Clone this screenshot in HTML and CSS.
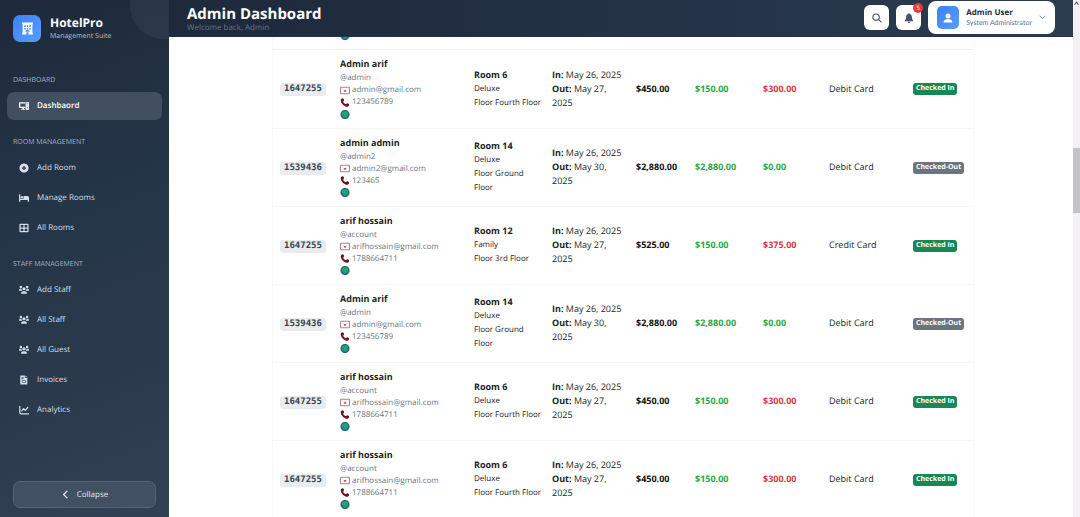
FILE: index.html
```html
<!DOCTYPE html>
<html lang="en">
<head>
<meta charset="utf-8">
<meta name="viewport" content="width=device-width, initial-scale=1">
<title>Admin Dashboard</title>
<link rel="stylesheet" href="styles.css">
</head>
<body>
<svg class="sprite" aria-hidden="true">
  <symbol id="i-building" viewBox="0 0 24 24"><path fill-rule="evenodd" d="M2 1h20v3h-1v16h1v3h-8v-4h-4v4H2v-3h1V4H2zM6 6v3h3V6zm5 0v3h2V6zm4 0v3h3V6zM6 11v3h3v-3zm5 0v3h2v-3zm4 0v3h3v-3zM8 18h8c0-5-8-5-8 0z"/></symbol>
  <symbol id="i-devices" viewBox="0 0 24 24"><path fill-rule="evenodd" d="M2 3h13v3H3v8h12v3h-3v2h3v2H5v-2h3v-2H2c-1 0-2-1-2-2V5c0-1 1-2 2-2zM17 3h6c1 0 1 0 1 1v16c0 1 0 1-1 1h-6c-1 0-1 0-1-1V4c0-1 0-1 1-1zm1 3v2h4V6zm0 4v1h4v-1zm2 5a1.300 1.300 0 1 0 .1 0z"/></symbol>
  <symbol id="i-plus" viewBox="0 0 24 24"><path fill-rule="evenodd" d="M12 1a11 11 0 1 0 .1 0zM10.500 7h3v3.500H17v3h-3.500V17h-3v-3.500H7v-3h3.500z"/></symbol>
  <symbol id="i-bed" viewBox="0 0 24 24"><path d="M0 3h3v11h8V7h9c2 0 4 2 4 4v10h-3v-4H3v4H0z"/><circle cx="7" cy="10" r="2.800"/></symbol>
  <symbol id="i-grid" viewBox="0 0 24 24"><path fill-rule="evenodd" d="M3 2h18c1 0 2 1 2 2v16c0 1-1 2-2 2H3c-1 0-2-1-2-2V4c0-1 1-2 2-2zm1 3v5.500h6.500V5zm9.500 0v5.500H20V5zM4 13.500V19h6.500v-5.500zm9.500 0V19H20v-5.500z"/></symbol>
  <symbol id="i-users" viewBox="0 0 24 24"><circle cx="4.500" cy="5" r="3"/><circle cx="19.500" cy="5" r="3"/><circle cx="12" cy="9" r="3.800"/><path d="M0 13c0-3 2-4 4-4h2c0 2 .5 3.500 2 5H0zM24 13c0-3-2-4-4-4h-2c0 2-.5 3.500-2 5h8zM5 21c0-4 2-6 5-6h4c3 0 5 2 5 6z"/></symbol>
  <symbol id="i-file" viewBox="0 0 24 24"><path fill-rule="evenodd" d="M4 1h10v6h6v15c0 1 0 1-1 1H4c-1 0-1 0-1-1V2c0-1 0-1 1-1zm2 4v1.500h5V5zm0 3.500V10h5V8.500zM7 13v5h10v-5zm1.500 1.500h7v2h-7z"/><path d="M15.500 1 20 5.500h-4.500z"/></symbol>
  <symbol id="i-chart" viewBox="0 0 24 24"><path d="M2 3v15c0 2 1 3 3 3h18M6.500 14l4.500-5 4 4 6-7" fill="none" stroke="currentColor" stroke-width="3" stroke-linecap="round" stroke-linejoin="round"/></symbol>
  <symbol id="i-left" viewBox="0 0 24 24"><path d="M16 3 7 12l9 9" fill="none" stroke="currentColor" stroke-width="3.500" stroke-linecap="round" stroke-linejoin="round"/></symbol>
  <symbol id="i-down" viewBox="0 0 24 24"><path d="m3 7 9 9 9-9" fill="none" stroke="currentColor" stroke-width="3" stroke-linecap="round" stroke-linejoin="round"/></symbol>
  <symbol id="i-search" viewBox="0 0 24 24"><path d="M16 16l6 6M17.500 10a7.700 7.700 0 1 1-15.400 0 7.700 7.700 0 0 1 15.400 0z" fill="none" stroke="currentColor" stroke-width="2.800" stroke-linecap="round"/></symbol>
  <symbol id="i-bell" viewBox="0 0 24 24"><path d="M12 0c1 0 1.600.7 1.600 1.600v.9C17 3.200 19 6 19 9.500c0 4 1 6 2.600 8 .8 1 .2 2-1 2H3.400c-1.200 0-1.800-1-1-2C4 15.500 5 13.500 5 9.500 5 6 7 3.200 10.400 2.500v-.9C10.400.7 11 0 12 0zM9 21h6c0 4-6 4-6 0z"/></symbol>
  <symbol id="i-user" viewBox="0 0 24 24"><circle cx="12" cy="7" r="6"/><path d="M1.500 23c0-5 3-8 7.500-8h6c4.500 0 7.500 3 7.500 8z"/></symbol>
  <symbol id="i-mail" viewBox="0 0 20 16"><path d="M1 1.500h18v13H1z" fill="#fff" stroke="#85807f" stroke-width="1.800"/><path d="M2 3l6 5M18 3l-6 5M3 13l4-4M17 13l-4-4" stroke="#ecdfe0" stroke-width="1.500"/><path d="M10 11.500 7.800 8.900c-.8-1.400 1.400-2.400 2.200-1 .8-1.400 3-.4 2.200 1z" fill="#e0404a"/></symbol>
  <symbol id="i-phone" viewBox="0 0 20 20"><path d="M3 1C6-1 9 4 7.500 6L6 7.500c1 3 3 5 6 6l2-1.500c2-1 6 1.500 5 4-1.500 4-6 4.500-10 2C4 15 0 9 .5 5 .8 3 1.500 2 3 1z" fill="#7d1420"/><path d="M2 3.500 6 4M14 18l2-4" stroke="#35151a" stroke-width="2"/></symbol>
  <symbol id="i-globe" viewBox="0 0 20 20"><circle cx="10" cy="10" r="9" fill="#1780a0" stroke="#16506d" stroke-width="2"/><path d="M3 7c2-4 9-5 12-3 2 3 3 6 0 9-2 4-5 4-7 2-1-3-5-4-5-8z" fill="#25a55f"/></symbol>
</svg>

<div class="app">
  <aside class="sidebar">
    <div class="brand">
      <span class="brand-logo"><svg class="icon-lg"><use href="#i-building"/></svg></span>
      <div><div class="brand-name">HotelPro</div><div class="brand-sub">Management Suite</div></div>
    </div>
    <nav class="nav">
      <section>
        <h2 class="nav-title">Dashboard</h2>
        <a class="nav-link active" href="#"><svg class="icon"><use href="#i-devices"/></svg>Dashbaord</a>
      </section>
      <section>
        <h2 class="nav-title">Room Management</h2>
        <a class="nav-link" href="#"><svg class="icon"><use href="#i-plus"/></svg>Add Room</a>
        <a class="nav-link" href="#"><svg class="icon"><use href="#i-bed"/></svg>Manage Rooms</a>
        <a class="nav-link" href="#"><svg class="icon"><use href="#i-grid"/></svg>All Rooms</a>
      </section>
      <section>
        <h2 class="nav-title">Staff Management</h2>
        <a class="nav-link" href="#"><svg class="icon"><use href="#i-users"/></svg>Add Staff</a>
        <a class="nav-link" href="#"><svg class="icon"><use href="#i-users"/></svg>All Staff</a>
        <a class="nav-link" href="#"><svg class="icon"><use href="#i-users"/></svg>All Guest</a>
        <a class="nav-link" href="#"><svg class="icon"><use href="#i-file"/></svg>Invoices</a>
        <a class="nav-link" href="#"><svg class="icon"><use href="#i-chart"/></svg>Analytics</a>
      </section>
    </nav>
    <button class="collapse" type="button"><svg class="icon-sm"><use href="#i-left"/></svg>Collapse</button>
  </aside>

  <div class="page">
    <header class="topbar">
      <div class="heading"><h1>Admin Dashboard</h1><p>Welcome back, Admin</p></div>
      <div class="actions">
        <button class="square" type="button" aria-label="Search"><svg class="icon"><use href="#i-search"/></svg></button>
        <button class="square" type="button" aria-label="Notifications"><svg class="icon"><use href="#i-bell"/></svg><span class="count">5</span></button>
        <button class="profile" type="button">
          <span class="avatar"><svg class="icon"><use href="#i-user"/></svg></span>
          <span class="who"><b>Admin User</b><span>System Administrator</span></span>
          <svg class="icon-xs"><use href="#i-down"/></svg>
        </button>
      </div>
    </header>
    <main class="content">
      <div class="bookings">
        <div class="row-tail"><svg class="mark"><use href="#i-globe"/></svg></div>
        <table>
          <colgroup><col class="c-id"><col class="c-guest"><col class="c-room"><col class="c-dates"><col class="c-total"><col class="c-paid"><col class="c-due"><col class="c-method"><col class="c-status"></colgroup>
          <tbody>
            <tr>
              <td><code>1647255</code></td>
              <td class="guest"><b>Admin arif</b><span>@admin</span><span><svg class="mark"><use href="#i-mail"/></svg>admin@gmail.com</span><span><svg class="mark"><use href="#i-phone"/></svg>123456789</span><span><svg class="mark"><use href="#i-globe"/></svg></span></td>
              <td class="room"><b>Room 6</b><span>Deluxe</span><span>Floor Fourth Floor</span></td>
              <td class="dates"><span><b>In:</b> May 26, 2025</span><span><b>Out:</b> May 27,</span><span>2025</span></td>
              <td class="money">$450.00</td><td class="money good">$150.00</td><td class="money bad">$300.00</td>
              <td>Debit Card</td><td><span class="status in">Checked In</span></td>
            </tr>
            <tr>
              <td><code>1539436</code></td>
              <td class="guest"><b>admin admin</b><span>@admin2</span><span><svg class="mark"><use href="#i-mail"/></svg>admin2@gmail.com</span><span><svg class="mark"><use href="#i-phone"/></svg>123465</span><span><svg class="mark"><use href="#i-globe"/></svg></span></td>
              <td class="room"><b>Room 14</b><span>Deluxe</span><span>Floor Ground<br>Floor</span></td>
              <td class="dates"><span><b>In:</b> May 26, 2025</span><span><b>Out:</b> May 30,</span><span>2025</span></td>
              <td class="money">$2,880.00</td><td class="money good">$2,880.00</td><td class="money good">$0.00</td>
              <td>Debit Card</td><td><span class="status out">Checked-Out</span></td>
            </tr>
            <tr>
              <td><code>1647255</code></td>
              <td class="guest"><b>arif hossain</b><span>@account</span><span><svg class="mark"><use href="#i-mail"/></svg>arifhossain@gmail.com</span><span><svg class="mark"><use href="#i-phone"/></svg>1788664711</span><span><svg class="mark"><use href="#i-globe"/></svg></span></td>
              <td class="room"><b>Room 12</b><span>Family</span><span>Floor 3rd Floor</span></td>
              <td class="dates"><span><b>In:</b> May 26, 2025</span><span><b>Out:</b> May 27,</span><span>2025</span></td>
              <td class="money">$525.00</td><td class="money good">$150.00</td><td class="money bad">$375.00</td>
              <td>Credit Card</td><td><span class="status in">Checked In</span></td>
            </tr>
            <tr>
              <td><code>1539436</code></td>
              <td class="guest"><b>Admin arif</b><span>@admin</span><span><svg class="mark"><use href="#i-mail"/></svg>admin@gmail.com</span><span><svg class="mark"><use href="#i-phone"/></svg>123456789</span><span><svg class="mark"><use href="#i-globe"/></svg></span></td>
              <td class="room"><b>Room 14</b><span>Deluxe</span><span>Floor Ground<br>Floor</span></td>
              <td class="dates"><span><b>In:</b> May 26, 2025</span><span><b>Out:</b> May 30,</span><span>2025</span></td>
              <td class="money">$2,880.00</td><td class="money good">$2,880.00</td><td class="money good">$0.00</td>
              <td>Debit Card</td><td><span class="status out">Checked-Out</span></td>
            </tr>
            <tr>
              <td><code>1647255</code></td>
              <td class="guest"><b>arif hossain</b><span>@account</span><span><svg class="mark"><use href="#i-mail"/></svg>arifhossain@gmail.com</span><span><svg class="mark"><use href="#i-phone"/></svg>1788664711</span><span><svg class="mark"><use href="#i-globe"/></svg></span></td>
              <td class="room"><b>Room 6</b><span>Deluxe</span><span>Floor Fourth Floor</span></td>
              <td class="dates"><span><b>In:</b> May 26, 2025</span><span><b>Out:</b> May 27,</span><span>2025</span></td>
              <td class="money">$450.00</td><td class="money good">$150.00</td><td class="money bad">$300.00</td>
              <td>Debit Card</td><td><span class="status in">Checked In</span></td>
            </tr>
            <tr>
              <td><code>1647255</code></td>
              <td class="guest"><b>arif hossain</b><span>@account</span><span><svg class="mark"><use href="#i-mail"/></svg>arifhossain@gmail.com</span><span><svg class="mark"><use href="#i-phone"/></svg>1788664711</span><span><svg class="mark"><use href="#i-globe"/></svg></span></td>
              <td class="room"><b>Room 6</b><span>Deluxe</span><span>Floor Fourth Floor</span></td>
              <td class="dates"><span><b>In:</b> May 26, 2025</span><span><b>Out:</b> May 27,</span><span>2025</span></td>
              <td class="money">$450.00</td><td class="money good">$150.00</td><td class="money bad">$300.00</td>
              <td>Debit Card</td><td><span class="status in">Checked In</span></td>
            </tr>
          </tbody>
        </table>
      </div>
    </main>
  </div>
  <div class="scrollbar" aria-hidden="true"><svg class="arrow" viewBox="0 0 6 4"><path d="M0 4 3 0l3 4H4.500L3 2 1.500 4z"/></svg><div class="thumb"></div></div>
</div>
</body>
</html>
```

FILE: styles.css
```css
* { box-sizing: border-box; }

body {
  margin: 0;
  font-family: "Open Sans", "Noto Sans", sans-serif;
  font-size: 9px;
  line-height: 14px;
  text-rendering: geometricPrecision;
  color: #212529;
  background: #fff;
}

h1, h2, p { margin: 0; }
button { font: inherit; text-rendering: inherit; cursor: pointer; border: 0; padding: 0; }
svg { fill: currentColor; flex: none; }
.sprite { position: absolute; width: 0; height: 0; }
.icon { width: 10px; height: 10px; }
.icon-lg { width: 13px; height: 13px; }
.icon-sm { width: 9px; height: 9px; }
.icon-xs { width: 7px; height: 7px; }

.app { display: flex; height: 100vh; overflow: hidden; }

/* Sidebar */
.sidebar {
  position: relative;
  flex: none;
  width: 169px;
  display: flex;
  flex-direction: column;
  overflow: hidden;
  padding: 14px 7px 9px;
  color: #e2e8f0;
  background: linear-gradient(160deg, #1e293b 0%, #253548 40%, #2b394c 70%, #334155 100%);
}
.sidebar::before {
  content: "";
  position: absolute;
  top: -28px;
  right: -28px;
  width: 67px;
  height: 67px;
  border-radius: 50%;
  background: rgba(255, 255, 255, 0.05);
}
.brand { display: flex; align-items: center; gap: 9px; padding: 0 6px; }
.brand-logo, .avatar {
  display: grid;
  place-items: center;
  color: #fff;
  background: linear-gradient(135deg, #3b82f6, #5b9cfa);
}
.brand-logo { width: 28px; height: 27px; border-radius: 7px; }
.brand-name { padding-top: 1px; font-size: 12px; font-weight: 700; line-height: 16px; color: #fff; }
.brand-sub { font-size: 7px; line-height: 11px; color: #b4bfcd; }

.nav { display: flex; flex-direction: column; gap: 17px; padding-top: 33px; flex: 1; }
.nav section { display: flex; flex-direction: column; gap: 2px; }
.nav-title {
  padding: 0 6px;
  margin-bottom: 4px;
  font-size: 7px;
  font-weight: 400;
  line-height: 11px;
  text-transform: uppercase;
  color: #a3b0c2;
}
.nav-link {
  display: flex;
  align-items: center;
  gap: 8px;
  height: 28px;
  padding: 0 12px;
  border-radius: 7px;
  font-size: 8px;
  color: #d5deea;
  text-decoration: none;
}
.nav-link.active { font-weight: 600; color: #fff; background: #424f60; }
.collapse {
  display: flex;
  align-items: center;
  justify-content: center;
  gap: 7px;
  height: 27px;
  margin: 0 6px;
  border: 1px solid #54647a;
  border-radius: 7px;
  font-size: 8px;
  color: #e2e8f0;
  background: #435063;
}

/* Top bar */
.page { flex: 1; min-width: 0; display: flex; flex-direction: column; }
.topbar {
  display: flex;
  align-items: center;
  justify-content: space-between;
  flex: none;
  height: 37px;
  padding: 0 18px 1px;
  background: linear-gradient(90deg, #1e293b, #243347 60%, #2d3d50);
  border-bottom: 1px solid #1c3450;
}
.heading { padding-top: 2px; }
.heading h1 { font-size: 15px; font-weight: 700; line-height: 18px; color: #fff; }
.heading p { font-size: 8px; line-height: 10px; color: #64748b; }
.actions { display: flex; align-items: center; gap: 7px; }
.square {
  position: relative;
  display: grid;
  place-items: center;
  width: 25px;
  height: 25px;
  border-radius: 6px;
  color: #475569;
  background: #fff;
}
.count {
  position: absolute;
  top: -2px;
  right: -2px;
  width: 10px;
  height: 10px;
  border-radius: 50%;
  font-size: 6px;
  line-height: 10px;
  text-align: center;
  color: #fff;
  background: #e53b3e;
}
.profile {
  display: flex;
  align-items: center;
  gap: 7px;
  height: 33px;
  padding: 0 9px;
  border-radius: 8px;
  color: #64748b;
  background: #fff;
}
.avatar { width: 22px; height: 23px; border-radius: 5px; }
.who { display: flex; flex-direction: column; text-align: left; }
.who b { font-size: 8px; line-height: 11px; color: #1e293b; }
.who span { font-family: Lato, sans-serif; font-size: 7px; line-height: 11px; }

/* Bookings table */
.content { flex: 1; min-height: 0; overflow: hidden; padding: 0 99px 0 103px; }
.bookings { border: 1px solid #fbf7fa; border-width: 0 1px; }
.row-tail {
  display: flex;
  height: 13px;
  padding-left: 67px;
  overflow: hidden;
  align-items: flex-start;
  border-bottom: 1px solid #f1f1f3;
}
.row-tail .mark { margin-top: -6px; }
table { width: 100%; table-layout: fixed; border-collapse: collapse; }
.c-id { width: 60px; }
.c-guest { width: 134px; }
.c-room { width: 78px; }
.c-dates { width: 84px; }
.c-total { width: 59px; }
.c-paid { width: 68px; }
.c-due { width: 66px; }
.c-method { width: 84px; }
.c-status { width: 67px; }
tr { height: 78px; }
td { padding: 0 7px; vertical-align: middle; white-space: nowrap; border-bottom: 1px solid #f7f7f9; }
td b { color: #1b1f23; }
.dates span { display: block; }
code {
  display: inline-block;
  padding: 0 4px;
  border-radius: 3px;
  font: 700 9px/13px "DejaVu Sans Mono", monospace;
  color: #3c4248;
  background: #e9ecef;
}
.guest b, .guest span, .room b, .room span { display: block; }
.guest b { padding-bottom: 1px; }
.guest span { display: flex; align-items: center; gap: 2px; height: 12px; font-size: 8px; line-height: 12px; color: #6c757d; }
.mark { width: 10px; height: 9px; }
.room span { font-size: 8px; }
.money { font-weight: 700; color: #111; }
.good { color: #28a745; }
.bad { color: #dc3545; }
.status {
  display: inline-block;
  padding: 0 3px;
  border-radius: 3px;
  font-size: 7px;
  font-weight: 700;
  line-height: 12px;
  vertical-align: middle;
  color: #fff;
}
.in { background: #198754; }
.out { background: #6c757d; }

/* Scroll track */
.scrollbar { flex: none; width: 7px; background: #f4f1f5; display: flex; flex-direction: column; align-items: center; }
.arrow { width: 5px; height: 4px; margin-top: 1px; color: #555; }
.thumb { width: 100%; height: 65px; margin-top: 143px; background: #c4c3c5; }
```
